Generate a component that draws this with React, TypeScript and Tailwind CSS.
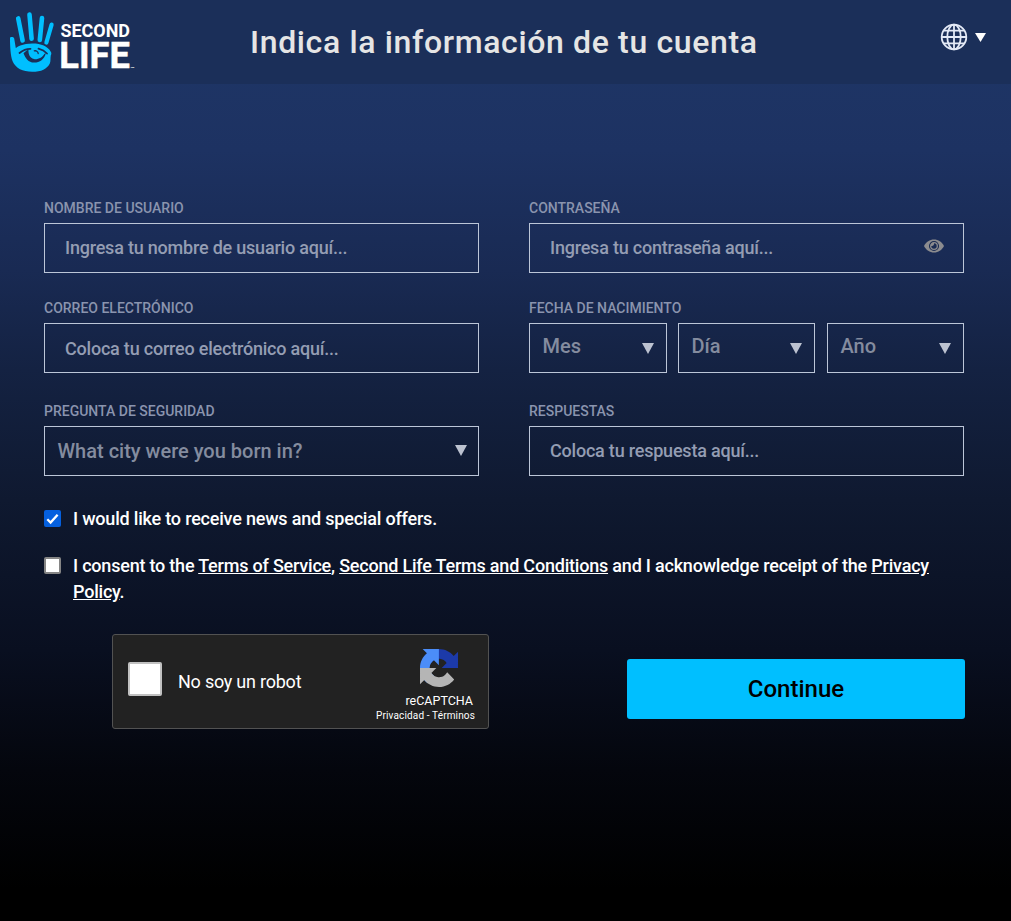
import React from "react";

function Logo() {
  return (
    <svg width="128" height="66" viewBox="8 10 128 66" role="img" aria-label="Second Life">
      <g fill="none" stroke="#00bfff" strokeLinecap="round">
        <path d="M18.200 18.400 22.600 40.500" strokeWidth="4.600" />
        <path d="M29.500 14.600 31.600 38.800" strokeWidth="4.600" />
        <path d="M42 18.100 39.800 40" strokeWidth="4.600" />
        <path d="M51.600 24.600 46.400 42.500" strokeWidth="4.200" />
      </g>
      <path
        fill="#00bfff"
        d="M10 38.200c0-1.600 3.600-1.400 4.200.3l1.600 9.500c.4 0 2-1.400 4.500-2.400 3.500-1.400 7.500-2.100 12-2.100 9.100 0 15.300 2.600 18.600 8.400.6 1.100.6 2.100-.1 3.300-.6 3.500.1 6-1 8.200-2.700 5.400-8.500 8.400-17.600 8.400-9.500 0-16.500-3.500-19.600-10.500C10.500 55.500 10 46.300 10 38.200Z"
      />
      <path d="M19.500 53c4-3.300 7.300-4.300 11-4.200M38.500 48.700c3.600.8 6.300 2.300 8.500 4.800" fill="none" stroke="#1b2f59" strokeLinecap="round" strokeWidth="1.800" />
      <path d="M23.500 53.200c1.500-1.600 3-2.800 5-3.500 0 0-1 8.200 6.300 9.600 4.300.1 8-2.500 9.500-5.300l1.600-1c-1.500 6.500-6.400 9.700-11.800 9.600-5.800-.2-8.800-4.500-10.600-9.400Z" fill="#1b2f59" />
      <path d="M34.300 50.900c1.700-.5 3.800.4 3.900 2.600" fill="none" stroke="#1b2f59" strokeLinecap="round" strokeWidth="1.300" />
      <g fill="#fff" className="font-['Roboto',sans-serif] font-bold">
        <text x="60.500" y="36.500" fontSize="18" textLength="69.500" lengthAdjust="spacingAndGlyphs">SECOND</text>
        <text x="59.300" y="68.300" fontSize="37" textLength="70.500" lengthAdjust="spacingAndGlyphs" stroke="#fff" strokeWidth=".5">LIFE</text>
        <text x="130.500" y="68" fontSize="2.500">TM</text>
      </g>
    </svg>
  );
}

function Globe() {
  return (
    <svg width="28" height="28" viewBox="0 0 28 28" fill="none" stroke="#e3e9f6" strokeWidth="1.800">
      <circle cx="14" cy="14" r="12.300" />
      <ellipse cx="14" cy="14" rx="6.700" ry="12.300" />
      <path d="M14 1.700v24.600M1.700 14h24.600M3.600 7.700h20.800M3.600 20.300h20.800" />
    </svg>
  );
}

function Caret() {
  return (
    <svg width="12" height="11" viewBox="0 0 12 11" fill="#bcc2d0">
      <path d="M0 0h12L6 11Z" />
    </svg>
  );
}

function Eye() {
  return (
    <svg width="20" height="14" viewBox="0 0 20 14">
      <path d="M0 7C2.200 2.800 5.700.5 10 .5S17.800 2.800 20 7c-2.200 4.200-5.700 6.500-10 6.500S2.200 11.200 0 7Z" fill="#8c8c8f" />
      <circle cx="10" cy="7" r="4.500" fill="#8c8c8f" stroke="#1a2b53" strokeWidth="1.100" />
      <path d="M10 4.300a2.700 2.700 0 1 1-2.700 2.700C8.800 7.500 10.400 6 10 4.300Z" fill="#1a2b53" />
    </svg>
  );
}

function Recaptcha() {
  return (
    <svg width="38" height="38" viewBox="0 0 64 64">
      <path fill="#1c3aa9" d="M64 31.955a33 33 0 0 0-.038-1.376V4.595l-7.183 7.183C50.900 4.582 41.961 0 31.950 0 21.532 0 12.276 4.962 6.437 12.647l11.774 11.898a15.600 15.600 0 0 1 4.770-5.352c2.056-1.605 4.970-2.917 8.969-2.917.483 0 .856.056 1.130.163 4.954.391 9.248 3.125 11.776 7.093l-8.334 8.334Z" />
      <path fill="#4b8df8" d="M31.862.005a33 33 0 0 0-1.376.038H4.502l7.183 7.183C4.489 13.104 0 21.951 0 31.955c0 10.418 4.870 19.766 12.555 25.605l11.897-11.773a15.600 15.600 0 0 1-5.352-4.770c-1.605-2.056-2.917-4.970-2.917-8.969 0-.483.056-.856.163-1.130.391-4.954 3.125-9.248 7.093-11.776l8.334 8.334Z" />
      <path fill="#b5b5b5" d="M0 31.955q.1.700.038 1.376v25.984l7.183-7.183C13.100 59.328 22.039 63.910 32.050 63.910c10.418 0 19.674-4.962 25.513-12.647L45.789 39.365a15.600 15.600 0 0 1-4.770 5.352c-2.056 1.605-4.970 2.917-8.969 2.917-.483 0-.856-.056-1.130-.163-4.954-.391-9.248-3.125-11.776-7.093l8.334-8.334Z" />
    </svg>
  );
}

function Label({ children }: { children: React.ReactNode }) {
  return <div className="mb-[5px] h-5 whitespace-nowrap text-sm leading-5 font-medium text-[#8a94ae]">{children}</div>;
}

function TextField({ label, hint, icon, low = false }: { label: string; hint: string; icon?: React.ReactNode; low?: boolean }) {
  return (
    <div>
      <Label>{label}</Label>
      <div className={`flex h-[50px] items-center justify-between border border-[#bcc6d8] pr-[19px] pl-5 text-lg font-medium text-[#949db3] ${low ? "pt-[2px]" : ""}`}>
        <span className="whitespace-nowrap tracking-[-0.210px]">{hint}</span>
        {icon}
      </div>
    </div>
  );
}

function SelectBox({ text, date = false, last = false }: { text: string; date?: boolean; last?: boolean }) {
  return (
    <div className={`flex h-[50px] min-w-0 flex-1 items-center justify-between border border-[#bcc6d8] text-xl font-medium text-[#848c9f] ${date ? "pr-[12px] pl-[12.500px]" : "pr-[11px] pl-[12.500px]"} ${last ? "ml-px" : ""}`}>
      <span className={`whitespace-nowrap ${date ? "pb-1" : ""}`}>{text}</span>
      <span className={date ? "pt-px" : "pb-[2px]"}><Caret /></span>
    </div>
  );
}

export default function App() {
  return (
    <div className="h-[921px] w-[1011px] overflow-hidden bg-[linear-gradient(180deg,#1f3768_0px,#1d3262_150px,#192a53_270px,#142242_370px,#0f1930_500px,#090f20_650px,#04060d_770px,#000_890px)] font-['Roboto',sans-serif] text-white">
      <header className="flex h-[84px] items-start justify-between bg-[#1b2f59] pl-2">
        <div className="w-[242px] pt-[10px]"><Logo /></div>
        <h1 className="flex-1 whitespace-nowrap pt-[22px] text-[32px] leading-10 font-medium tracking-[0.640px] text-[#e5e5e5]">Indica la información de tu cuenta</h1>
        <div className="flex items-center gap-[7px] pt-[23px] pr-[25px]">
          <Globe />
          <svg width="11" height="9" viewBox="0 0 11 9" fill="#fff"><path d="M0 0h11L5.500 9Z" /></svg>
        </div>
      </header>
      <main className="pt-[114px] pr-[47px] pl-[44px]">
        <div className="grid grid-cols-2 gap-x-[50px]">
          <TextField label="NOMBRE DE USUARIO" hint="Ingresa tu nombre de usuario aquí..." />
          <TextField label="CONTRASEÑA" hint="Ingresa tu contraseña aquí..." icon={<span className="pb-[4px]"><Eye /></span>} />
          <div className="pt-[25px]"><TextField label="CORREO ELECTRÓNICO" hint="Coloca tu correo electrónico aquí..." low /></div>
          <div className="pt-[25px]">
            <Label>FECHA DE NACIMIENTO</Label>
            <div className="grid grid-cols-[138px_137px_138px] gap-[11px]">
              <SelectBox text="Mes" date />
              <SelectBox text="Día" date />
              <SelectBox text="Año" date last />
            </div>
          </div>
          <div className="pt-[28px]">
            <Label>PREGUNTA DE SEGURIDAD</Label>
            <div className="flex"><SelectBox text="What city were you born in?" /></div>
          </div>
          <div className="pt-[28px]"><TextField label="RESPUESTAS" hint="Coloca tu respuesta aquí..." /></div>
        </div>
        <div className="mt-[30px] flex items-start gap-3 text-lg leading-[26px] font-medium tracking-[-0.200px]">
          <span className="mt-[4px] flex size-[17px] items-center justify-center rounded-[2px] bg-[#0560df]">
            <svg width="13" height="12" viewBox="0 0 13 12" fill="none" stroke="#fff" strokeWidth="2.300"><path d="m1.300 6.300 3.300 3.300 7-7.800" /></svg>
          </span>
          <span>I would like to receive news and special offers.</span>
        </div>
        <div className="mt-[21px] flex items-start gap-3 text-lg leading-[26px] font-medium tracking-[-0.210px]">
          <span className="mt-[4px] size-[17px] shrink-0 rounded-[2px] border-2 border-[#858585] bg-white" />
          <span>
            I consent to the <u>Terms of Service</u>, <u>Second Life Terms and Conditions</u> and I acknowledge receipt of the <u>Privacy</u>
            <br />
            <u>Policy</u>.
          </span>
        </div>
        <div className="mt-[29px] flex items-start justify-between pl-[68px]">
          <div className="flex h-[95px] w-[377px] rounded-[3px] border border-[#525252] bg-[#222]">
            <span className="mt-[27px] ml-[15px] size-[34px] rounded-[2px] border-2 border-[#c1c1c1] bg-white" />
            <span className="mt-[35px] ml-4 flex-1 text-lg leading-6 tracking-[-0.230px] whitespace-nowrap">No soy un robot</span>
            <div className="mr-[13px] flex flex-col items-end whitespace-nowrap">
              <span className="mt-[14px] mr-[17px]"><Recaptcha /></span>
              <span className="mt-[6px] mr-[2px] text-[12.500px] leading-4">reCAPTCHA</span>
              <span className="text-[10px] leading-[14px] tracking-[0.140px]">Privacidad - Términos</span>
            </div>
          </div>
          <button className="mt-[25px] mr-[-1px] h-[60px] w-[338px] rounded-[3px] bg-[#00bfff] text-2xl font-medium text-black">Continue</button>
        </div>
      </main>
    </div>
  );
}
